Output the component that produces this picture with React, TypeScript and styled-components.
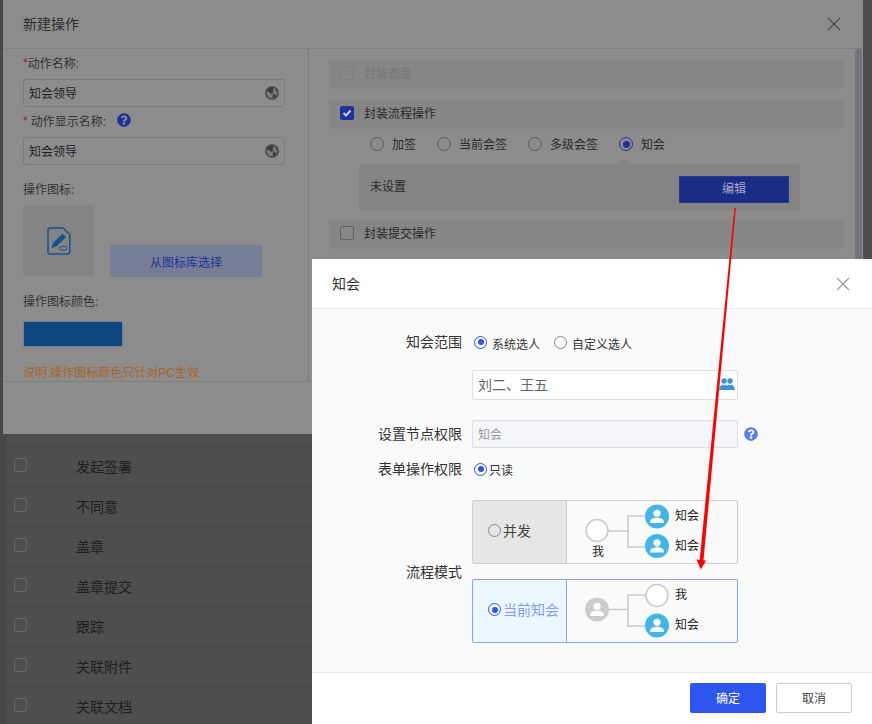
import React from "react";
import styled, { createGlobalStyle } from "styled-components";
import { FaQuestionCircle } from "react-icons/fa";

const SANS = `"Liberation Sans", "Noto Sans CJK SC", sans-serif`;

const Global = createGlobalStyle`
  html, body { margin: 0; padding: 0; background: #4f4f4f; }
  body { font-family: ${SANS}; overflow: hidden; }
  * { box-sizing: border-box; }
`;

const Page = styled.div`
  position: relative;
  width: 872px;
  height: 724px;
  overflow: hidden;
  background: #4e4e4e;
  padding: 446px 0 0 7px;
`;
const Strip = styled.div`
  position: absolute;
  left: 0;
  top: 0;
  width: 7px;
  height: 100%;
  background: #484848;
`;
const TableRow = styled.div`
  display: flex;
  align-items: center;
  height: 40px;
  padding: 0 0 2px 7px;
  border-top: 1px solid #464646;
  color: #1e1e1e;
  font-size: 14px;
`;
const TableCheck = styled.span`
  width: 13px;
  height: 14px;
  border: 1px solid #666;
  border-radius: 2px;
  margin-right: 49px;
  margin-top: -1px;
`;

/* Dimmed dialog */
const BackDialog = styled.div`
  position: absolute;
  left: 3px;
  top: 0;
  width: 860px;
  height: 434px;
  background: #8c8c8c;
  display: flex;
  flex-direction: column;
  color: #2a2a2a;
  font-size: 12px;
`;
const BackHeader = styled.div`
  height: 49px;
  flex: none;
  display: flex;
  align-items: center;
  justify-content: space-between;
  padding: 0 22px 3px 20px;
  border-bottom: 1px solid #808080;
  font-size: 14px;
  color: #2e2e2e;
  svg { margin-top: 3px; }
`;
const BackBody = styled.div`
  display: flex;
  height: 333px;
  flex: none;
  border-bottom: 1px solid #808080;
`;
const LeftPane = styled.div`
  width: 306px;
  flex: none;
  padding: 5px 23px 0 20px;
  border-right: 1px solid #747988;
`;
const FieldLabel = styled.div<{ $mt: number }>`
  display: flex;
  align-items: center;
  height: 18px;
  margin-top: ${(p) => p.$mt}px;
  padding-bottom: 1px;
  color: #333;
`;
const Req = styled.span<{ $gap?: number }>`
  color: #8e1f26;
  margin-right: ${(p) => p.$gap ?? 0}px;
`;
const HelpDark = styled(FaQuestionCircle)`
  margin-left: 11px;
  margin-top: -1px;
  color: #20329a;
  font-size: 14px;
`;
const FieldInput = styled.div<{ $mt: number }>`
  display: flex;
  align-items: center;
  justify-content: space-between;
  height: 28px;
  margin-top: ${(p) => p.$mt}px;
  padding: 0 5px 2px;
  border: 1px solid #797979;
  border-radius: 3px;
  color: #1e1e1e;
  svg { margin-top: 2px; }
`;
const IconRow = styled.div`
  display: flex;
  align-items: flex-end;
  gap: 16px;
  margin-top: 7px;
`;
const IconBox = styled.div`
  width: 71px;
  height: 71px;
  margin-bottom: 1px;
  background: #848484;
  border-radius: 2px;
  display: flex;
  align-items: center;
  justify-content: center;
`;
const LibraryButton = styled.div`
  width: 152px;
  height: 32px;
  border-radius: 2px;
  background: #767e96;
  color: #20329a;
  display: flex;
  align-items: center;
  justify-content: center;
`;
const ColorBox = styled.div`
  width: 100px;
  height: 26px;
  margin-top: 11px;
  background: #0e4780;
  border: 1px solid #74808f;
  border-radius: 2px;
`;
const Note = styled.div`
  height: 18px;
  line-height: 18px;
  margin-top: 17px;
  color: #a8662a;
  white-space: nowrap;
`;
const RightPane = styled.div`
  flex: 1;
  display: flex;
`;
const RightContent = styled.div`
  flex: 1;
  padding: 10px 11px 0 20px;
`;
const Scrollbar = styled.div`
  width: 7px;
  margin-right: 1px;
  background: #71747e;
  border-radius: 3px;
`;
const OptionRow = styled.div<{ $mt?: number; $muted?: boolean }>`
  display: flex;
  align-items: center;
  height: 30px;
  margin-top: ${(p) => p.$mt ?? 0}px;
  padding: 0 0 3px 11px;
  gap: 10px;
  background: #868686;
  color: ${(p) => (p.$muted ? "#767676" : "#2a2a2a")};
`;
const BackCheck = styled.span<{ $on?: boolean; $muted?: boolean }>`
  width: 14px;
  height: 14px;
  border-radius: 2px;
  display: flex;
  align-items: center;
  justify-content: center;
  border: 1px solid ${(p) => (p.$on ? "#20329a" : p.$muted ? "#7a7e8a" : "#5c6070")};
  background: ${(p) => (p.$on ? "#20329a" : "transparent")};
`;
const RadioGroup = styled.div`
  display: flex;
  align-items: center;
  height: 30px;
  padding-left: 41px;
  gap: 21px;
`;
const RadioItem = styled.span<{ $gap: number }>`
  display: flex;
  align-items: center;
  gap: ${(p) => p.$gap}px;
  white-space: nowrap;
`;
const RadioLabel = styled.span`
  margin-top: -2px;
`;
const Radio = styled.span<{ $on?: boolean; $size: number; $on_color: string; $off_color: string }>`
  flex: none;
  position: relative;
  width: ${(p) => p.$size}px;
  height: ${(p) => p.$size}px;
  border-radius: 50%;
  border: 1px solid ${(p) => (p.$on ? p.$on_color : p.$off_color)};
  &::after {
    content: "";
    display: ${(p) => (p.$on ? "block" : "none")};
    position: absolute;
    inset: 2.5px;
    border-radius: 50%;
    background: ${(p) => p.$on_color};
  }
`;
const Popover = styled.div`
  position: relative;
  display: flex;
  justify-content: space-between;
  align-items: flex-start;
  width: 441px;
  height: 47px;
  margin: 5px 0 8px 30px;
  padding: 12px 11px 0;
  background: #848484;
  border-radius: 4px;
  line-height: 22px;
  &::before {
    content: "";
    position: absolute;
    left: 259px;
    top: -6px;
    border-left: 6px solid transparent;
    border-right: 6px solid transparent;
    border-bottom: 6px solid #848484;
  }
`;
const EditButton = styled.div`
  width: 110px;
  height: 27px;
  padding-bottom: 1px;
  background: #1c2c84;
  border: 1px solid #263a94;
  color: #a2a8c8;
  display: flex;
  align-items: center;
  justify-content: center;
`;

/* Front dialog */
const FrontDialog = styled.div`
  position: absolute;
  left: 312px;
  top: 259px;
  width: 560px;
  height: 465px;
  background: #fff;
  display: flex;
  flex-direction: column;
  color: #333;
`;
const FrontHeader = styled.div`
  height: 50px;
  flex: none;
  display: flex;
  align-items: center;
  justify-content: space-between;
  padding: 0 22px 2px 20px;
  border-bottom: 1px solid #e8eaee;
  font-size: 14px;
  svg { margin-top: 2px; }
`;
const FrontBody = styled.div`
  flex: 1;
  background: #fafafa;
  padding-top: 21px;
`;
const FormRow = styled.div<{ $mt?: number; $h?: number }>`
  display: flex;
  align-items: center;
  margin-top: ${(p) => p.$mt ?? 0}px;
  min-height: ${(p) => p.$h ?? 0}px;
`;
const RowLabel = styled.div<{ $raise?: number }>`
  width: 150px;
  flex: none;
  margin: -${(p) => p.$raise ?? 0}px 10px 0 0;
  text-align: right;
  font-size: 14px;
  color: #333;
`;
const ChoiceGroup = styled.div<{ $gap: number }>`
  display: flex;
  align-items: center;
  gap: ${(p) => p.$gap}px;
  padding-left: 2px;
  font-size: 12px;
  color: #333;
`;
const ChoiceSpacer = styled.span`
  width: 4px;
`;
const ChoiceText = styled.span<{ $drop: number }>`
  padding-top: ${(p) => p.$drop}px;
`;
const TextBox = styled.div<{ $disabled?: boolean }>`
  width: 266px;
  height: ${(p) => (p.$disabled ? 28 : 30)}px;
  display: flex;
  align-items: center;
  justify-content: space-between;
  padding: 0 2px 2px 5px;
  border: 1px solid #dcdfe8;
  border-radius: 2px;
  background: ${(p) => (p.$disabled ? "#f4f6fa" : "#fff")};
  color: ${(p) => (p.$disabled ? "#999" : "#666")};
  font-size: ${(p) => (p.$disabled ? 12 : 14)}px;
`;
const HelpLight = styled(FaQuestionCircle)`
  margin-left: 6px;
  color: #5c7df0;
  font-size: 14px;
`;
const ModeStack = styled.div`
  display: flex;
  flex-direction: column;
  gap: 15px;
`;
const ModeCard = styled.div<{ $active?: boolean }>`
  display: flex;
  width: 266px;
  height: 64px;
  border: 1px solid ${(p) => (p.$active ? "#86a3f5" : "#cfcfcf")};
  border-radius: 2px;
  background: #fafafa;
`;
const ModeSide = styled.div<{ $active?: boolean }>`
  width: 94px;
  flex: none;
  display: flex;
  align-items: center;
  gap: 2px;
  padding: 0 0 3px 15px;
  font-size: 14px;
  background: ${(p) => (p.$active ? "#ecf7ff" : "#e6e6e6")};
  color: ${(p) => (p.$active ? "#7f9dff" : "#444")};
  border-right: 1px solid ${(p) => (p.$active ? "#86a3f5" : "#cfcfcf")};
  white-space: nowrap;
`;
const ModeText = styled.span`
  margin-top: -2px;
`;
const Diagram = styled.svg`
  width: 170px;
  height: 62px;
  display: block;
  text { font-size: 12px; fill: #222; font-family: "Noto Sans CJK SC", sans-serif; }
`;
const FrontFooter = styled.div`
  height: 52px;
  flex: none;
  display: flex;
  justify-content: flex-end;
  gap: 10px;
  padding: 10px 20px 0 0;
  border-top: 1px solid #e8e8e8;
`;
const FooterButton = styled.div<{ $primary?: boolean }>`
  width: 76px;
  height: 30px;
  padding-bottom: 2px;
  display: flex;
  align-items: center;
  justify-content: center;
  font-size: 12px;
  border-radius: 2px;
  background: ${(p) => (p.$primary ? "#2e55ee" : "#fff")};
  color: ${(p) => (p.$primary ? "#fff" : "#444")};
  border: 1px solid ${(p) => (p.$primary ? "#2e55ee" : "#cccccc")};
`;
const ArrowOverlay = styled.svg`
  position: absolute;
  left: 0;
  top: 0;
  width: 872px;
  height: 724px;
  pointer-events: none;
`;

const Close = ({ color }: { color: string }) => (
  <svg width="14" height="14" viewBox="0 0 14 14" fill="none" stroke={color} strokeWidth="1.1">
    <path d="M1 1 L13 13 M13 1 L1 13" />
  </svg>
);

const Check = () => (
  <svg width="10" height="10" viewBox="0 0 10 10" fill="none" stroke="#c8cce0" strokeWidth="2">
    <path d="M1.5 5 L4 7.5 L8.5 2.5" />
  </svg>
);

const Globe = () => (
  <svg width="14" height="14" viewBox="0 0 14 14">
    <circle cx="7" cy="7" r="6.2" fill="#7a7a7a" stroke="#3c3c3c" strokeWidth="1.3" />
    <path d="M3.5 2.5 L7 1.5 L9 3 L7.5 5 L8.5 7 L6.5 8 L4.5 6.5 L2 5.5 Z" fill="#3c3c3c" />
    <path d="M8 8.5 L11 8 L10.5 11 L8.5 12.5 L7.5 10.5 Z" fill="#3c3c3c" />
    <path d="M10.5 3 L12.5 5 L11 6 Z" fill="#3c3c3c" />
  </svg>
);

const People = () => (
  <svg width="16" height="14" viewBox="0 0 16 14" fill="#3d93d3">
    <circle cx="5" cy="4" r="2.7" />
    <circle cx="11" cy="4" r="2.7" />
    <path d="M0 13 C0.4 9.5 2 8 3.8 7.4 L5 8.6 L6.2 7.4 C7 7.7 7.6 8.1 8 8.7 C8.4 8.1 9 7.7 9.8 7.4 L11 8.6 L12.2 7.4 C14 8 15.6 9.5 16 13 Z" />
  </svg>
);

const DocIcon = () => (
  <svg width="24" height="28" viewBox="0 0 24 28" fill="none">
    <path d="M2.5 1 H16 L22.8 7.5 V25 a2 2 0 0 1 -2 2 H3 a2 2 0 0 1 -2 -2 V3 a2 2 0 0 1 1.5 -2 Z" stroke="#155290" strokeWidth="1.5" />
    <path d="M4.5 21 L6 16 L15.5 6.5 L19 10 L9.5 19.5 Z" fill="#155290" />
    <rect x="12.5" y="19.5" width="7.5" height="3.6" rx="1.8" stroke="#155290" strokeWidth="1" />
  </svg>
);

const Avatar = ({ x, y, grey }: { x: number; y: number; grey?: boolean }) => (
  <g transform={`translate(${x} ${y})`}>
    <circle r="12" fill={grey ? "#cccccc" : "#41b6e6"} />
    <circle cy="-3.2" r="3.6" fill="#fff" />
    <path d="M-7 6.5 C-7 1.8 -3.5 1.2 0 1.2 C3.5 1.2 7 1.8 7 6.5 Z" fill="#fff" />
  </g>
);

const Ring = ({ x, y }: { x: number; y: number }) => (
  <circle cx={x} cy={y} r="11" fill="#fff" stroke="#cccccc" strokeWidth="1.6" />
);

const rows = ["发起签署", "不同意", "盖章", "盖章提交", "跟踪", "关联附件", "关联文档"];

export default function App() {
  return (
    <Page>
      <Global />
      <Strip />
      {rows.map((r) => (
        <TableRow key={r}>
          <TableCheck />
          {r}
        </TableRow>
      ))}

      <BackDialog>
        <BackHeader>
          新建操作
          <Close color="#4a4a4a" />
        </BackHeader>
        <BackBody>
          <LeftPane>
            <FieldLabel $mt={0}><Req>*</Req>动作名称:</FieldLabel>
            <FieldInput $mt={7}>知会领导<Globe /></FieldInput>
            <FieldLabel $mt={5}><Req $gap={3}>*</Req>动作显示名称:<HelpDark /></FieldLabel>
            <FieldInput $mt={7}>知会领导<Globe /></FieldInput>
            <FieldLabel $mt={15}>操作图标:</FieldLabel>
            <IconRow>
              <IconBox><DocIcon /></IconBox>
              <LibraryButton>从图标库选择</LibraryButton>
            </IconRow>
            <FieldLabel $mt={15}>操作图标颜色:</FieldLabel>
            <ColorBox />
            <Note>说明:操作图标颜色只针对PC生效</Note>
          </LeftPane>
          <RightPane>
            <RightContent>
              <OptionRow $muted><BackCheck $muted />封装态度</OptionRow>
              <OptionRow $mt={10}><BackCheck $on><Check /></BackCheck>封装流程操作</OptionRow>
              <RadioGroup>
                {["加签", "当前会签", "多级会签", "知会"].map((t, i) => (
                  <RadioItem key={t} $gap={8}>
                    <Radio $size={14} $on={i === 3} $on_color="#20329a" $off_color="#5a5a5a" />
                    <RadioLabel>{t}</RadioLabel>
                  </RadioItem>
                ))}
              </RadioGroup>
              <Popover>
                未设置
                <EditButton>编辑</EditButton>
              </Popover>
              <OptionRow><BackCheck />封装提交操作</OptionRow>
            </RightContent>
            <Scrollbar />
          </RightPane>
        </BackBody>
      </BackDialog>

      <FrontDialog>
        <FrontHeader>
          知会
          <Close color="#999" />
        </FrontHeader>
        <FrontBody>
          <FormRow $h={24}>
            <RowLabel $raise={3}>知会范围</RowLabel>
            <ChoiceGroup $gap={5}>
              <Radio $size={13} $on $on_color="#2e55ee" $off_color="#888" />
              <ChoiceText $drop={3}>系统选人</ChoiceText>
              <ChoiceSpacer />
              <Radio $size={13} $on_color="#2e55ee" $off_color="#888" />
              <ChoiceText $drop={3}>自定义选人</ChoiceText>
            </ChoiceGroup>
          </FormRow>
          <FormRow $mt={16}>
            <RowLabel />
            <TextBox>刘二、王五<People /></TextBox>
          </FormRow>
          <FormRow $mt={20}>
            <RowLabel $raise={2}>设置节点权限</RowLabel>
            <TextBox $disabled>知会</TextBox>
            <HelpLight />
          </FormRow>
          <FormRow $mt={9} $h={24}>
            <RowLabel $raise={3}>表单操作权限</RowLabel>
            <ChoiceGroup $gap={2}>
              <Radio $size={13} $on $on_color="#2e55ee" $off_color="#888" />
              <ChoiceText $drop={1}>只读</ChoiceText>
            </ChoiceGroup>
          </FormRow>
          <FormRow $mt={19}>
            <RowLabel $raise={2}>流程模式</RowLabel>
            <ModeStack>
              <ModeCard>
                <ModeSide>
                  <Radio $size={13} $on_color="#2e55ee" $off_color="#888" />
                  <ModeText>并发</ModeText>
                </ModeSide>
                <Diagram viewBox="0 0 170 62">
                  <path d="M41 30 H61 M78 15 H61 V46 H78" fill="none" stroke="#cccccc" strokeWidth="1.6" />
                  <Ring x={30} y={29.5} />
                  <Avatar x={90} y={15.5} />
                  <Avatar x={90} y={45} />
                  <text x="25" y="55">我</text>
                  <text x="108" y="19">知会</text>
                  <text x="108" y="49">知会</text>
                </Diagram>
              </ModeCard>
              <ModeCard $active>
                <ModeSide $active>
                  <Radio $size={13} $on $on_color="#2e55ee" $off_color="#888" />
                  <ModeText>当前知会</ModeText>
                </ModeSide>
                <Diagram viewBox="0 0 170 62">
                  <path d="M41 29.5 H61 M78 15 H61 V46 H78" fill="none" stroke="#cccccc" strokeWidth="1.6" />
                  <Avatar x={30} y={29.5} grey />
                  <Ring x={90} y={15.5} />
                  <Avatar x={90} y={45.5} />
                  <text x="108" y="19">我</text>
                  <text x="108" y="49">知会</text>
                </Diagram>
              </ModeCard>
            </ModeStack>
          </FormRow>
        </FrontBody>
        <FrontFooter>
          <FooterButton $primary>确定</FooterButton>
          <FooterButton>取消</FooterButton>
        </FrontFooter>
      </FrontDialog>

      <ArrowOverlay viewBox="0 0 872 724">
        <path d="M734.4 208 L735.9 208 L703.4 561 L699.6 561 Z" fill="#ff0000" />
        <path d="M696.5 559.5 L706 560.5 L700.8 569.5 Z" fill="#ff0000" />
      </ArrowOverlay>
    </Page>
  );
}
